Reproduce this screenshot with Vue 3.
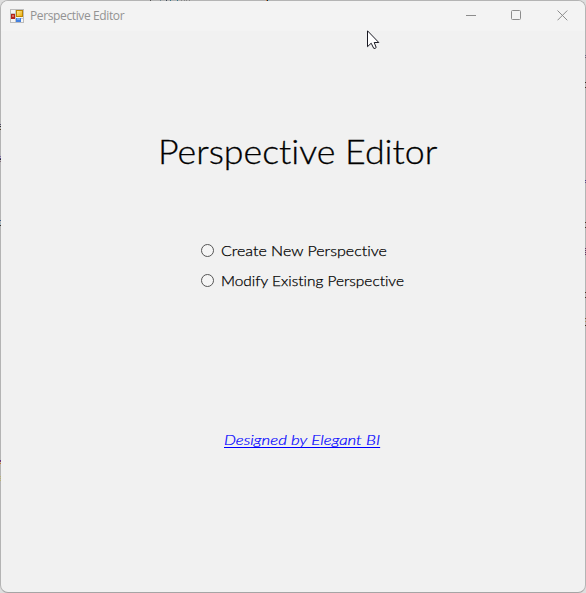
<script setup>
import { ref } from 'vue'

const choice = ref('')
const options = [
  { value: 'create', label: 'Create New Perspective' },
  { value: 'modify', label: 'Modify Existing Perspective' },
]
</script>

<template>
  <div class="desktop">
    <main class="window">
      <header class="titlebar">
        <svg class="app-icon" width="14" height="14" viewBox="0 0 14 14">
          <defs>
            <linearGradient id="gold" x1="0" y1="0" x2="1" y2="1">
              <stop offset="0" stop-color="#fff0a0" />
              <stop offset="1" stop-color="#eba800" />
            </linearGradient>
          </defs>
          <rect x=".5" y=".5" width="13" height="13" fill="#f5f5f5" stroke="#bcbcbc" />
          <path d="M5.5 1V13M1 9.5H13M1 4.5H5" stroke="#c6c6c6" />
          <rect x="6.5" y="1.5" width="6" height="6" fill="url(#gold)" stroke="#bd8500" />
          <rect x="1" y="5" width="4" height="5" fill="#b3221b" />
          <rect x="2" y="6" width="2" height="2" fill="#dc6b60" />
          <rect x="6" y="9" width="5" height="4" fill="#4481e1" />
          <rect x="7" y="9" width="3" height="2" fill="#77a9f1" />
        </svg>
        <span class="caption">Perspective Editor</span>
        <div class="controls">
          <svg width="11" height="11" viewBox="0 0 11 11"><path d="M0 5.5H10" /></svg>
          <svg width="11" height="11" viewBox="0 0 11 11"><rect x=".5" y=".5" width="9" height="9" rx="1" /></svg>
          <svg width="11" height="11" viewBox="0 0 11 11"><path d="M.5 .5L10.3 10.3M10.3 .5L.5 10.3" /></svg>
        </div>
      </header>
      <h1><span class="title">Perspective Editor</span></h1>
      <form class="options">
        <label v-for="option in options" :key="option.value">
          <input v-model="choice" type="radio" name="mode" :value="option.value" />
          <span :class="['label', option.value]">{{ option.label }}</span>
        </label>
      </form>
      <a class="credit" href="#">Designed by Elegant BI</a>
    </main>
    <i class="edge left"></i>
    <i class="edge right"></i>
    <i class="edge top"></i>
    <svg class="cursor" width="14" height="21" viewBox="0 0 14 21">
      <path d="M.5 .8V16.7L4.2 13.2L6.7 18.3Q8 19 9.2 17.5L7.2 12.5H11.8Z" fill="#fff" stroke="#191923" />
    </svg>
  </div>
</template>

<style>
body { margin: 0; }
</style>

<style scoped>
.desktop {
  position: relative;
  box-sizing: border-box;
  width: 586px;
  height: 593px;
  overflow: hidden;
  background: #dedede;
}
.window {
  box-sizing: border-box;
  width: 586px;
  height: 593px;
  display: flex;
  flex-direction: column;
  align-items: flex-start;
  border: 1px solid #b4b4b4;
  border-bottom-color: #a5a5a5;
  border-radius: 8px;
  background: #f1f1f1;
  color: #000;
  font-family: "Century Gothic", "URW Gothic", Lato, sans-serif;
  font-variant-ligatures: none;
}
.titlebar {
  box-sizing: border-box;
  width: 100%;
  height: 30px;
  display: flex;
  align-items: center;
  padding: 0 17px 0 9px;
  border-radius: 7px 7px 0 0;
  background: #f3f3f3;
}
.app-icon { margin-top: -1px; }
.caption {
  margin-left: 6px;
  color: #929292;
  font: 12px/16px "Segoe UI", "Open Sans", sans-serif;
  letter-spacing: -.38px;
  white-space: nowrap;
}
.controls {
  display: grid;
  grid-template-columns: 45px 46px 11px;
  margin: -1px 0 0 auto;
}
.controls svg {
  fill: none;
  stroke: #8c8c8c;
}
h1 {
  margin: 100px 0 0 157px;
  font-size: 33px;
  line-height: 40px;
  font-weight: 300;
  white-space: nowrap;
}
.title {
  display: inline-block;
  transform: scaleX(1.083);
  transform-origin: left;
  -webkit-text-stroke: .3px #000;
}
.options {
  display: flex;
  flex-direction: column;
  gap: 10px;
  margin: 70px 0 0 200px;
}
.options label {
  display: flex;
  align-items: center;
  height: 20px;
  gap: 7px;
  font-size: 14.5px;
  line-height: 20px;
  white-space: nowrap;
}
.options input {
  appearance: none;
  box-sizing: border-box;
  width: 13px;
  height: 13px;
  margin: -1px 0 0;
  border: 1px solid #555;
  border-radius: 50%;
  background: #f5f5f5;
}
.options input:checked { border: 4px solid #0067c0; }
.label {
  display: inline-block;
  transform-origin: left;
  font-weight: 300;
  -webkit-text-stroke: .25px #000;
}
.create { transform: scaleX(1.104); }
.modify { transform: scaleX(1.063); }
.credit {
  margin: 139px 0 0 223px;
  transform: scaleX(1.16);
  transform-origin: left;
  color: #00f;
  font-size: 14.5px;
  font-weight: 300;
  line-height: 20px;
  font-style: italic;
  -webkit-text-stroke: .2px #00f;
  text-decoration: underline;
  text-decoration-thickness: 1px;
  text-underline-offset: 2px;
  text-decoration-skip-ink: none;
  white-space: nowrap;
}
/* Slivers of the windows behind, visible along the frame */
.edge {
  position: absolute;
  width: 1px;
  height: 1px;
  background: transparent;
}
.left {
  left: 0;
  top: 0;
  box-shadow: 0 124px #55506a, 0 126px #333, 0 129px #5b4a35,
    0 156px #7a6aa5, 0 158px #4d3f8d, 0 159px #333, 0 161px #806b78,
    0 220px #3b5d88, 0 223px #96bdcb, 0 225px #333,
    0 460px #5a3291, 0 461px #863a5a, 0 463px #c57b35,
    0 476px #b9b276, 0 478px #b9b276, 0 480px #b9b276;
}
.right {
  right: 0;
  top: 0;
  box-shadow: 0 55px #6a6888, 0 57px #6a6070, 0 82px #443027, 0 87px #443027,
    0 180px #493b88, 0 182px #635088, 0 222px #563629, 0 227px #443027,
    0 248px #633961, 0 250px #633961, 0 252px #633961, 0 254px #633961,
    0 292px #563629, 0 297px #443027, 0 318px #785b3e, 0 321px #b38b5e, 0 325px #463225;
}
.top {
  left: 0;
  top: 0;
  box-shadow: 150px 0 #555, 160px 0 #6e8690, 166px 0 #404a58, 170px 0 #35778b,
    177px 0 #35778b, 181px 0 #888, 184px 0 #888, 186px 0 #888, 189px 0 #888,
    266px 0 #d07a35, 267px 0 #202737, 268px 0 #82b7cb;
}
.cursor {
  position: absolute;
  left: 367px;
  top: 30px;
}
</style>
